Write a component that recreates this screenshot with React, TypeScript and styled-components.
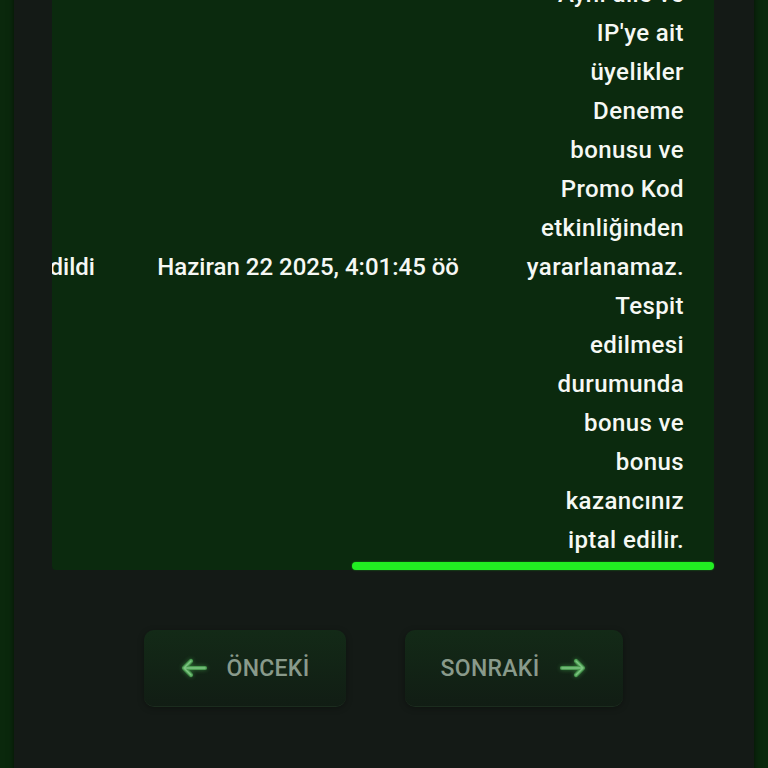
import React, { useLayoutEffect, useRef, useState } from 'react';
import styled, { createGlobalStyle } from 'styled-components';

const Global = createGlobalStyle`
  html, body { margin: 0; padding: 0; }
  body {
    background: #0a280c;
    font-family: Roboto, "Noto Sans", sans-serif;
  }
`;

const Viewport = styled.div`
  height: 100vh;
  overflow-y: auto;
  &::-webkit-scrollbar { display: none; }
`;

const Panel = styled.main`
  margin: 0 14px;
  min-height: 100vh;
  background: #141a16;
  box-shadow: 0 0 6px rgba(0, 0, 0, 0.6);
  padding: 24px 40px 140px 38px;
`;

const Title = styled.h2`
  margin: 0 0 20px;
  color: #e8f2e8;
  font-size: 28px;
  font-weight: 600;
`;

const TableCard = styled.div`
  background: #0b2a0e;
  border-radius: 0 0 4px 4px;
`;

const TableScroll = styled.div`
  overflow: hidden;
`;

const Track = styled.div`
  position: relative;
  height: 8px;
  margin-top: 2px;
`;

const Thumb = styled.div`
  position: absolute;
  top: 0;
  height: 8px;
  border-radius: 4px;
  background: #22ee22;
  box-shadow: 0 0 2px rgba(34, 238, 34, 0.5);
`;

const Table = styled.table`
  width: 1211px;
  table-layout: fixed;
  border-collapse: collapse;
  color: #f6f8f4;
  font-size: 24px;
  font-weight: 500;
  line-height: 39px;
`;

const Head = styled.th`
  padding: 12px 30px;
  text-align: right;
  font-weight: 600;
  color: #8fd48f;
`;

const Cell = styled.td<{ $wrap?: boolean }>`
  padding: 0 30px;
  text-align: right;
  vertical-align: middle;
  white-space: ${(p) => (p.$wrap ? 'normal' : 'nowrap')};
  letter-spacing: ${(p) => (p.$wrap ? '0.4px' : '0')};
`;

const Pager = styled.nav`
  display: flex;
  justify-content: center;
  gap: 59px;
  margin-top: 60px;
`;

const PageButton = styled.button`
  display: flex;
  align-items: center;
  gap: 19px;
  height: 76px;
  padding: 0 36px;
  border: none;
  border-radius: 10px;
  background: linear-gradient(180deg, #132a17 0%, #111d14 100%);
  box-shadow: 0 1px 0 #1b2c1e, 0 2px 6px rgba(0, 0, 0, 0.35);
  color: #899a8b;
  font-family: Roboto, sans-serif;
  font-size: 23px;
  font-weight: 500;
  letter-spacing: 0.3px;
  cursor: pointer;
`;

const ArrowSvg = styled.svg<{ $flip?: boolean }>`
  width: 28px;
  height: 20px;
  transform: ${(p) => (p.$flip ? 'scaleX(-1)' : 'none')};
  filter: drop-shadow(0 0 2px rgba(80, 200, 90, 0.45));
`;

function Arrow({ flip }: { flip?: boolean }) {
  return (
    <ArrowSvg $flip={flip} viewBox="0 0 28 20" fill="none" strokeLinecap="round" strokeLinejoin="round">
      <path d="M25 10H4M11 3 4 10l7 7" stroke="#4a9a50" strokeWidth="4.2" />
      <path d="M25 10H4M11 3 4 10l7 7" stroke="#7cc481" strokeWidth="1.6" />
    </ArrowSvg>
  );
}

const columns = [100, 162, 140, 220, 364, 225];
const headers = ['#', 'Bonus', 'Tutar', 'Durum', 'Tarih', 'Açıklama'];

const description =
  "Aynı aile ve IP'ye ait üyelikler Deneme bonusu ve Promo Kod etkinliğinden yararlanamaz. Tespit edilmesi durumunda bonus ve bonus kazancınız iptal edilir.";

export default function App() {
  const viewRef = useRef<HTMLDivElement>(null);
  const scrollRef = useRef<HTMLDivElement>(null);
  const rowRef = useRef<HTMLTableRowElement>(null);
  const [thumb, setThumb] = useState({ left: 0, width: 0 });

  useLayoutEffect(() => {
    const view = viewRef.current;
    const scroller = scrollRef.current;
    const row = rowRef.current;
    if (scroller) {
      scroller.scrollLeft = scroller.scrollWidth;
      const visible = scroller.clientWidth;
      const total = scroller.scrollWidth;
      const width = (visible / total) * visible;
      const left = (scroller.scrollLeft / total) * visible;
      setThumb({ left, width });
    }
    if (view && row) {
      const top = row.getBoundingClientRect().top - view.getBoundingClientRect().top;
      view.scrollTop = top + 25;
    }
  }, []);

  return (
    <>
      <Global />
      <Viewport ref={viewRef}>
        <Panel>
          <Title>Bonus Geçmişi</Title>
          <TableCard>
            <TableScroll ref={scrollRef}>
              <Table>
                <colgroup>
                  {columns.map((w, i) => (
                    <col key={i} style={{ width: w }} />
                  ))}
                </colgroup>
                <thead>
                  <tr>
                    {headers.map((h) => (
                      <Head key={h}>{h}</Head>
                    ))}
                  </tr>
                </thead>
                <tbody>
                  <tr ref={rowRef}>
                    <Cell>1</Cell>
                    <Cell>Deneme Bonusu</Cell>
                    <Cell>50 ₺</Cell>
                    <Cell>İptal edildi</Cell>
                    <Cell>Haziran 22 2025, 4:01:45 öö</Cell>
                    <Cell $wrap>{description}</Cell>
                  </tr>
                </tbody>
              </Table>
            </TableScroll>
            <Track>
              <Thumb style={{ left: thumb.left, width: thumb.width }} />
            </Track>
          </TableCard>
          <Pager>
            <PageButton>
              <Arrow />
              ÖNCEKİ
            </PageButton>
            <PageButton>
              SONRAKİ
              <Arrow flip />
            </PageButton>
          </Pager>
        </Panel>
      </Viewport>
    </>
  );
}
